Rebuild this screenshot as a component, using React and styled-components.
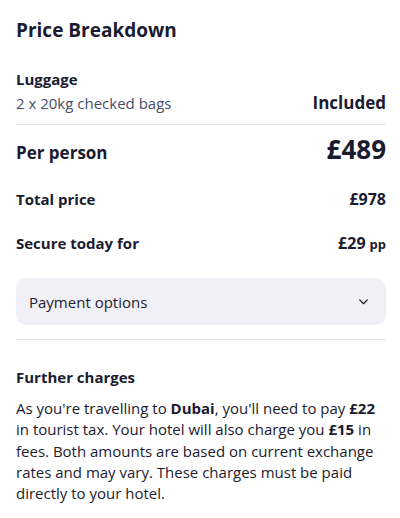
import React from "react";
import styled, { createGlobalStyle } from "styled-components";

const Global = createGlobalStyle`
  html, body { margin: 0; padding: 0; background: #ffffff; }
  body { font-family: "Open Sans", "Noto Sans", sans-serif; color: #1b1b2f; }
  * { box-sizing: border-box; }
`;

const Panel = styled.div`
  width: 400px;
  padding: 16px 14px 0 16px;
  display: flex;
  flex-direction: column;
`;

const Title = styled.h2`
  margin: 0;
  font-size: 19px;
  line-height: 28px;
  font-weight: 700;
  color: #1b1b2f;
`;

const Section = styled.div`
  display: flex;
  flex-direction: column;
  margin-top: ${(p) => p.$mt || 0}px;
`;

const Row = styled.div`
  display: flex;
  justify-content: space-between;
  align-items: baseline;
  margin-top: ${(p) => p.$mt || 0}px;
`;

const Label = styled.div`
  font-size: ${(p) => p.$size || 15}px;
  line-height: ${(p) => p.$lh || 22}px;
  font-weight: 700;
  color: #1b1b2f;
`;

const Sub = styled.div`
  font-size: 15px;
  line-height: 22px;
  color: #4b4d68;
`;

const Value = styled.div`
  font-size: ${(p) => p.$size || 16}px;
  font-weight: 700;
  line-height: ${(p) => p.$lh || 22}px;
  color: #1b1b2f;
`;

const Unit = styled.span`
  font-size: 13px;
  font-weight: 700;
  margin-left: 4px;
`;

const Divider = styled.hr`
  border: 0;
  height: 1px;
  background: #e6e5ef;
  margin: ${(p) => p.$m || "0"};
`;

const Accordion = styled.button`
  all: unset;
  display: flex;
  align-items: center;
  justify-content: space-between;
  height: 47px;
  padding: 0 16px 0 13px;
  border-radius: 10px;
  background: #f1f0f7;
  font-family: "Open Sans", sans-serif;
  font-size: 15px;
  color: #1b1b2f;
  margin-top: 23px;
`;

const Paragraph = styled.p`
  margin: 10px 0 0;
  font-size: 15px;
  line-height: 21.3px;
  color: #1b1b2f;
  b { font-weight: 700; }
`;

const Chevron = () => (
  <svg width="13" height="13" viewBox="0 0 24 24" fill="none" stroke="#1b1b2f" strokeWidth="2.4" strokeLinecap="round" strokeLinejoin="round">
    <path d="M5 9l7 7 7-7" />
  </svg>
);

export default function App() {
  return (
    <>
      <Global />
      <Panel>
        <Title>Price Breakdown</Title>
        <Section $mt={24}>
          <Label>Luggage</Label>
          <Row $mt={2}>
            <Sub>2 x 20kg checked bags</Sub>
            <Value $size={17}>Included</Value>
          </Row>
        </Section>
        <Divider $m="10px 0 0" />
        <Row $mt={9}>
          <Label $size={17} $lh={30}>Per person</Label>
          <Value $size={26} $lh={30}>£489</Value>
        </Row>
        <Row $mt={20}>
          <Label>Total price</Label>
          <Value>£978</Value>
        </Row>
        <Row $mt={22}>
          <Label>Secure today for</Label>
          <Value>£29<Unit>pp</Unit></Value>
        </Row>
        <Accordion>
          <span>Payment options</span>
          <Chevron />
        </Accordion>
        <Divider $m="14px 0 0" />
        <Section $mt={26}>
          <Label>Further charges</Label>
          <Paragraph>
            As you're travelling to <b>Dubai</b>, you'll need to pay <b>£22</b> in tourist tax. Your hotel will also charge you <b>£15</b> in fees. Both amounts are based on current exchange rates and may vary. These charges must be paid directly to your hotel.
          </Paragraph>
        </Section>
      </Panel>
    </>
  );
}
